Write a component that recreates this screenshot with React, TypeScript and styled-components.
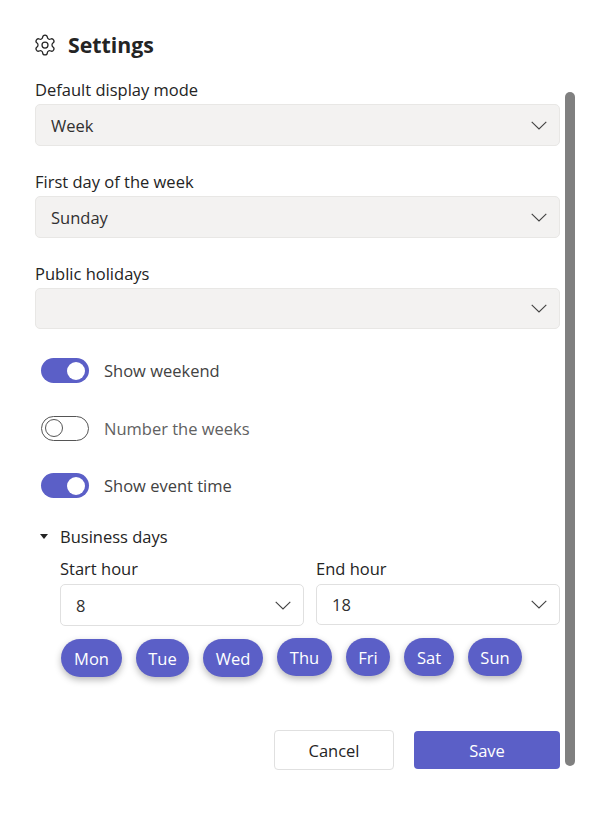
import React from "react";
import styled, { createGlobalStyle } from "styled-components";
import { Settings as GearIcon } from "lucide-react";

const Global = createGlobalStyle`
  html, body { margin: 0; padding: 0; background: #fff; }
  body { font-family: "Open Sans", "Noto Sans", "Liberation Sans", sans-serif; color: #242424; }
`;

const Page = styled.div`
  position: relative;
  width: 612px;
  height: 823px;
  box-sizing: border-box;
  padding: 31px 52px 0 35px;
  overflow: hidden;
`;

const ScrollThumb = styled.div`
  position: absolute;
  left: 565px;
  top: 92px;
  width: 10px;
  height: 674px;
  border-radius: 5px;
  background: #808080;
`;

const Header = styled.header`
  display: flex;
  align-items: center;
  gap: 11px;
  height: 28px;
  margin-bottom: 23px;
`;

const Gear = styled(GearIcon)`
  width: 24px;
  height: 24px;
  margin-left: -2px;
  color: #242424;
  stroke-width: 1.25;
`;

const Title = styled.h1`
  margin: 0;
  font-size: 21.3px;
  line-height: 28px;
  font-weight: 700;
`;

const Field = styled.div`
  display: flex;
  flex-direction: column;
  margin-bottom: 28px;
`;

const FieldLabel = styled.label<{ $height?: number }>`
  display: block;
  height: ${(p) => p.$height ?? 22}px;
  font-size: 16.5px;
  line-height: 16px;
`;

const SelectBox = styled.div<{ $filled?: boolean; $height?: number }>`
  display: flex;
  align-items: center;
  justify-content: space-between;
  box-sizing: border-box;
  height: ${(p) => p.$height ?? 42}px;
  padding: 0 12px 0 15px;
  border-radius: 5px;
  border: 1px solid ${(p) => (p.$filled ? "#e8e7e5" : "#e0e0e0")};
  background: ${(p) => (p.$filled ? "#f3f2f1" : "#ffffff")};
  font-size: 16.5px;
  color: #303030;
`;

const Chevron = () => (
  <svg width="16" height="9" viewBox="0 0 16 9" fill="none">
    <path d="M0.7 0.8 L8 8 L15.3 0.8" stroke="#424242" strokeWidth="1.1" />
  </svg>
);

const Toggles = styled.div`
  display: flex;
  flex-direction: column;
  gap: 32.5px;
  padding: 1px 0 0 6px;
`;

const ToggleRow = styled.div`
  display: flex;
  align-items: center;
  gap: 15px;
  height: 25px;
`;

const Track = styled.div<{ $on: boolean }>`
  display: flex;
  align-items: center;
  justify-content: ${(p) => (p.$on ? "flex-end" : "flex-start")};
  box-sizing: border-box;
  width: 48px;
  height: 25px;
  padding: 0 ${(p) => (p.$on ? 4 : 3)}px;
  border-radius: 13px;
  background: ${(p) => (p.$on ? "#5b5fc7" : "#ffffff")};
  border: ${(p) => (p.$on ? "none" : "1px solid #555555")};
`;

const Knob = styled.div<{ $on: boolean }>`
  box-sizing: border-box;
  width: 18px;
  height: 18px;
  border-radius: 50%;
  background: #ffffff;
  border: ${(p) => (p.$on ? "none" : "1px solid #555555")};
`;

const ToggleLabel = styled.span<{ $muted?: boolean }>`
  font-size: 16.5px;
  color: ${(p) => (p.$muted ? "#616161" : "#424242")};
`;

const Section = styled.div`
  display: flex;
  align-items: center;
  gap: 12px;
  height: 24px;
  margin: 26px 0 0 5px;
  font-size: 16.5px;
`;

const Caret = styled.span`
  width: 0;
  height: 0;
  border-left: 4.5px solid transparent;
  border-right: 4.5px solid transparent;
  border-top: 5px solid #242424;
`;

const HourGrid = styled.div`
  display: grid;
  grid-template-columns: 244px 244px;
  column-gap: 12px;
  margin-left: 25px;
  padding-top: 13px;
`;

const HourField = styled.div`
  display: flex;
  flex-direction: column;
`;

const Days = styled.div`
  display: flex;
  align-items: flex-start;
  gap: 14px;
  margin: 12px 0 0 26px;
`;

const DayPill = styled.div<{ $low: boolean }>`
  display: flex;
  align-items: center;
  justify-content: center;
  box-sizing: border-box;
  height: 38px;
  margin-top: ${(p) => (p.$low ? 1 : 0)}px;
  border-radius: 19px;
  background: #5b5fc7;
  color: #ffffff;
  font-size: 16.5px;
  box-shadow: 0 3px 7px rgba(0, 0, 0, 0.28);
`;

const Actions = styled.div`
  display: flex;
  justify-content: flex-end;
  align-items: center;
  gap: 20px;
  margin-top: 53px;
`;

const CancelButton = styled.button`
  width: 120px;
  height: 40px;
  box-sizing: border-box;
  background: #fff;
  border: 1px solid #e0e0e0;
  border-radius: 4px;
  font: inherit;
  font-size: 16.5px;
  color: #242424;
`;

const SaveButton = styled.button`
  width: 146px;
  height: 38px;
  box-sizing: border-box;
  background: #5b5fc7;
  border: none;
  border-radius: 4px;
  font: inherit;
  font-size: 16.5px;
  color: #fff;
`;

const toggles = [
  { label: "Show weekend", on: true },
  { label: "Number the weeks", on: false },
  { label: "Show event time", on: true },
];

const days = [
  { name: "Mon", width: 61, low: true },
  { name: "Tue", width: 53, low: true },
  { name: "Wed", width: 60, low: true },
  { name: "Thu", width: 55, low: false },
  { name: "Fri", width: 44, low: false },
  { name: "Sat", width: 50, low: false },
  { name: "Sun", width: 54, low: false },
];

export default function App() {
  return (
    <Page>
      <Global />
      <Header>
        <Gear />
        <Title>Settings</Title>
      </Header>
      <Field>
        <FieldLabel>Default display mode</FieldLabel>
        <SelectBox $filled>Week<Chevron /></SelectBox>
      </Field>
      <Field>
        <FieldLabel>First day of the week</FieldLabel>
        <SelectBox $filled>Sunday<Chevron /></SelectBox>
      </Field>
      <Field>
        <FieldLabel>Public holidays</FieldLabel>
        <SelectBox $filled $height={41}><span /><Chevron /></SelectBox>
      </Field>
      <Toggles>
        {toggles.map((t) => (
          <ToggleRow key={t.label}>
            <Track $on={t.on}><Knob $on={t.on} /></Track>
            <ToggleLabel $muted={!t.on}>{t.label}</ToggleLabel>
          </ToggleRow>
        ))}
      </Toggles>
      <Section><Caret />Business days</Section>
      <HourGrid>
        <HourField>
          <FieldLabel $height={23}>Start hour</FieldLabel>
          <SelectBox>8<Chevron /></SelectBox>
        </HourField>
        <HourField>
          <FieldLabel $height={23}>End hour</FieldLabel>
          <SelectBox $height={41}>18<Chevron /></SelectBox>
        </HourField>
      </HourGrid>
      <Days>
        {days.map((d) => (
          <DayPill key={d.name} $low={d.low} style={{ width: d.width }}>{d.name}</DayPill>
        ))}
      </Days>
      <Actions>
        <CancelButton>Cancel</CancelButton>
        <SaveButton>Save</SaveButton>
      </Actions>
      <ScrollThumb />
    </Page>
  );
}
